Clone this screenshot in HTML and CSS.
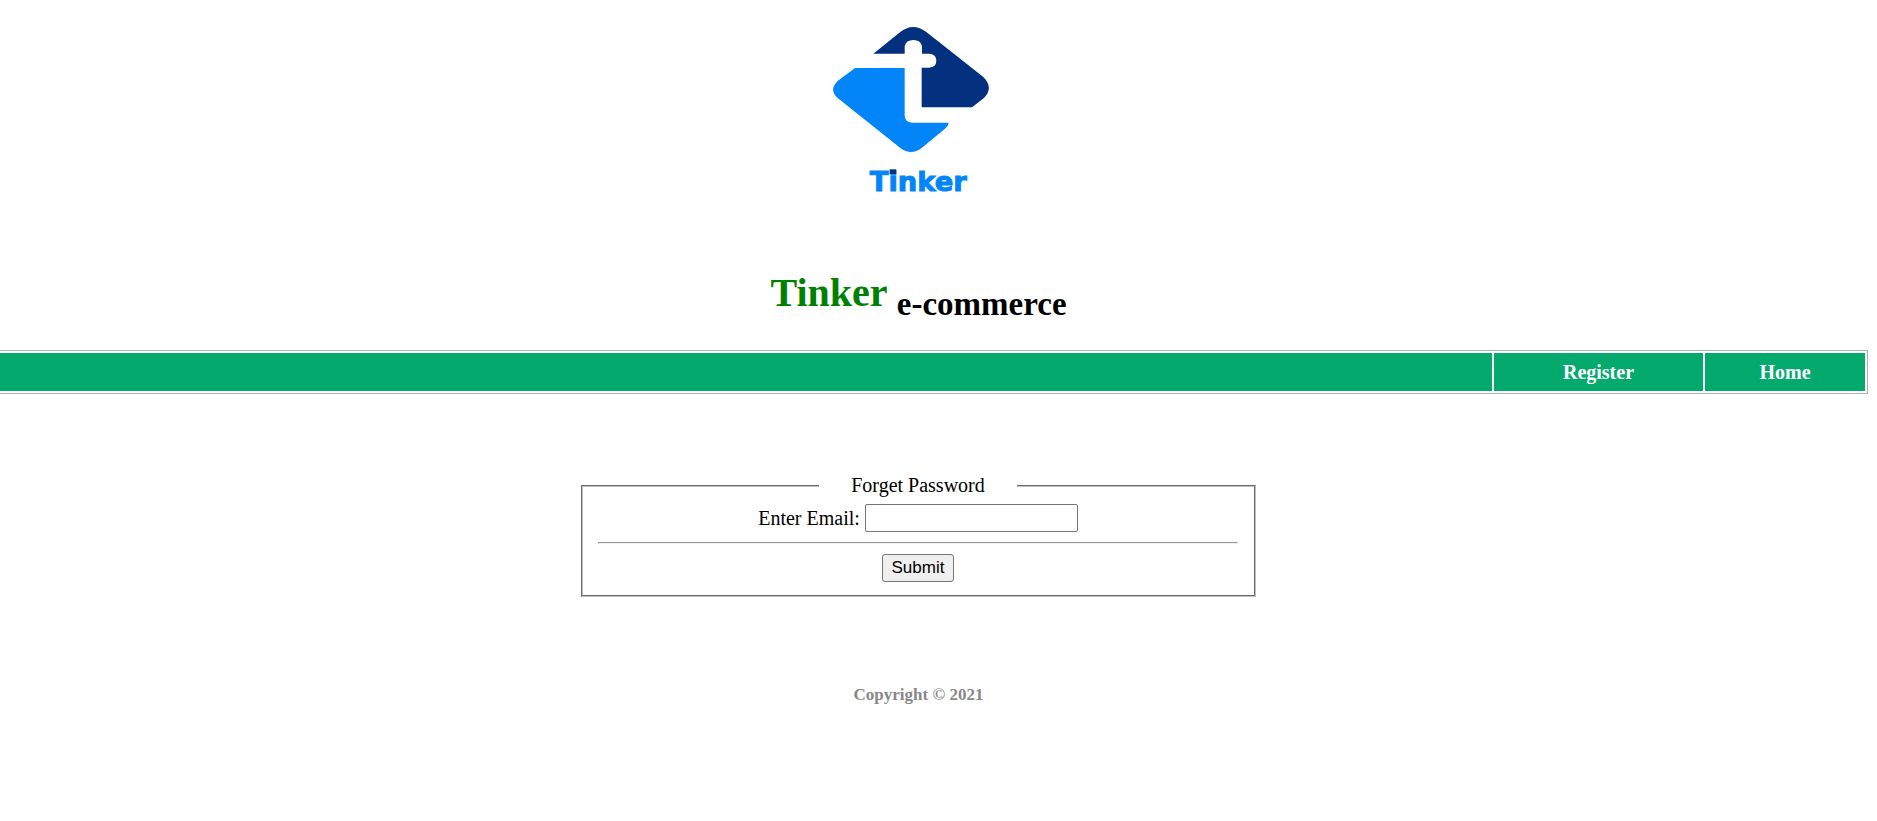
FILE: index.html
```
<!DOCTYPE html>
<html lang="en">
<head>
<meta charset="utf-8">
<title>Forget Password</title>
<link rel="stylesheet" href="styles.css">
</head>
<body>
<header class="brand">
  <svg class="logo" viewBox="0 0 600 600" role="img" aria-label="Tinker">
    <path fill="#03307f" d="M190 131 L268 68 Q308 35 348 65 L520 201 Q552 233 522 264 L486 292 H335 V173 H357 Q379 171 379 152 Q379 132 357 131 H336 V108 Q332 90 310 90 Q288 90 284 108 V131 Z"/>
    <path fill="#0285f9" d="M135 174 H284 V318 Q286 336 305 338 H416 Q415 348 405 356 L335 414 Q303 438 271 414 L82 263 Q57 240 82 214 Z"/>
    <text class="logo-text" x="325" y="543" text-anchor="middle">Tinker</text>
    <rect x="239" y="478" width="20" height="14" fill="#03307f"/>
  </svg>
  <h1 class="title"><span class="title-name">Tinker</span> <sub class="title-sub">e-commerce</sub></h1>
</header>
<nav class="nav">
  <span class="nav-fill"></span>
  <a class="nav-link nav-register" href="#">Register</a>
  <a class="nav-link nav-home" href="#">Home</a>
</nav>
<main class="content">
  <form class="form">
    <fieldset class="box">
      <legend class="legend">Forget Password</legend>
      <div class="row">
        <label for="email">Enter Email:</label>
        <input class="field" id="email" type="email">
      </div>
      <hr class="rule">
      <button class="submit" type="submit">Submit</button>
    </fieldset>
  </form>
</main>
<footer class="footer">Copyright © 2021</footer>
</body>
</html>
```
FILE: styles.css
```
* {
  box-sizing: border-box;
}

body {
  margin: 0;
  background: #fff;
  color: #000;
  font: 20px/23px "Liberation Serif", "Times New Roman", serif;
}

.brand,
.content,
.footer {
  margin-right: 40px;
  text-align: center;
}

.brand {
  display: flex;
  flex-direction: column;
  align-items: center;
  padding-top: 10px;
}

.logo {
  width: 200px;
  height: 200px;
  margin-right: 17px;
}

.logo-text {
  fill: #0285f9;
  stroke: #0285f9;
  stroke-width: 3px;
  font: bold 82px "DejaVu Sans", sans-serif;
}

.title {
  margin: 60px 0 29px;
  font-size: 40px;
  line-height: 46px;
}

.title-name {
  color: #008000;
}

.title-sub {
  font-size: 33px;
  line-height: 1;
}

.nav {
  display: flex;
  gap: 2px;
  margin-right: 9px;
  padding: 2px 2px 2px 0;
  border: 1px solid #b2b2b2;
  border-left: 0;
}

.nav-fill,
.nav-link {
  height: 38px;
  background: #04aa6d;
}

.nav-fill {
  flex: 1;
}

.nav-link {
  color: #fff;
  font-weight: bold;
  line-height: 38px;
  text-align: center;
  text-decoration: none;
}

.nav-register {
  width: 209px;
}

.nav-home {
  width: 160px;
}

.form {
  width: 675px;
  max-width: 100%;
  margin: 80px auto 0;
}

.box {
  margin: 0;
  padding: 7px 16px 13px 15px;
  border: 2px solid;
  border: 2px groove #c0c0c0;
}

.legend {
  margin: 0 auto;
  padding: 0 32px;
}

.row {
  display: flex;
  justify-content: center;
  align-items: center;
  gap: 5px;
}

.field {
  width: 213px;
  height: 28px;
  border: 1px solid #767676;
  border-radius: 2px;
  font: 17px "Liberation Sans", Arial, sans-serif;
}

.rule {
  margin: 10px 0;
  border: 1px solid;
  border-color: #9a9a9a #eee #eee #9a9a9a;
}

.submit {
  height: 28px;
  padding: 0 9px;
  border: 1px solid #767676;
  border-radius: 3px;
  background: #efefef;
  color: #000;
  font: 17px "Liberation Sans", Arial, sans-serif;
}

.footer {
  margin-top: 86px;
  color: #888;
  font-size: 17px;
  font-weight: bold;
}
```
